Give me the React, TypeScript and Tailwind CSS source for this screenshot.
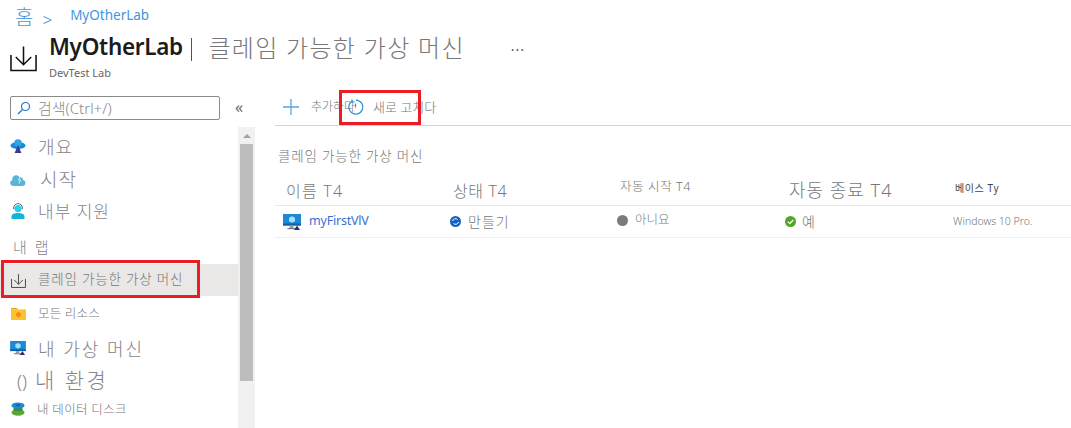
import { ReactNode } from 'react';

const font = 'font-["Noto_Sans","Noto_Sans_CJK_KR",sans-serif]';

function DownloadIcon({ className = '' }: { className?: string }) {
  return (
    <svg className={className} viewBox="0 0 28 28" fill="none" stroke="currentColor" strokeWidth={1.6}>
      <path d="M1 11v16h26V11" />
      <path d="M14 2v19M6 13l8 8 8-8" />
    </svg>
  );
}

function CloudIcon() {
  return (
    <svg className="w-[16px] h-[16px]" viewBox="0 0 16 16">
      <ellipse cx="8" cy="6.5" rx="7.5" ry="3.6" fill="#1e88d8" />
      <circle cx="8" cy="4" r="3.8" fill="#2fa4e7" />
      <path d="M8 6l3.4 8H4.6z" fill="#3b3a8f" />
    </svg>
  );
}

function BoltCloudIcon() {
  return (
    <svg className="w-[16px] h-[12px]" viewBox="0 0 16 12">
      <path d="M3 12a3 3 0 0 1-.6-5.9A4 4 0 0 1 9.6 3 3.4 3.4 0 0 1 13 6.1 3 3 0 0 1 13 12z" fill="#59b4d9" />
      <path d="M11 1L8.5 6h2L9 9.5" stroke="#ffffff" strokeWidth={0.8} fill="none" />
    </svg>
  );
}

function SupportIcon() {
  return (
    <svg className="w-[14px] h-[16px]" viewBox="0 0 14 16">
      <path d="M0.5 16v-2.5C0.5 11 3.5 10 7 10s6.5 1 6.5 3.5V16z" fill="#12b5d8" />
      <circle cx="7" cy="5.6" r="3.6" fill="#28d0f0" />
      <path d="M2.6 6V5a4.4 4.4 0 0 1 8.8 0v1" fill="none" stroke="#555555" strokeWidth={0.9} />
    </svg>
  );
}

function FolderIcon() {
  return (
    <svg className="w-[15px] h-[13px]" viewBox="0 0 15 13">
      <path d="M0 1h6l1 1.5H0z" fill="#d9a520" />
      <rect x="0" y="2.5" width="15" height="10.5" fill="#fcc22d" />
      <path d="M7.5 5l2.4 1.3v2.6L7.5 10.4 5.1 8.9V6.3z" fill="#f08a24" />
    </svg>
  );
}

function MonitorIcon({ className = '' }: { className?: string }) {
  return (
    <svg className={className} viewBox="0 0 18 16">
      <rect x="0" y="0" width="18" height="11.5" fill="#1e88d8" />
      <rect x="0" y="9.5" width="18" height="2" fill="#0f5fa8" />
      <path d="M9 2.2l3 1.6v3.4L9 8.8 6 7.2V3.8z" fill="#9fe3f7" />
      <rect x="6.5" y="11.5" width="4" height="2.5" fill="#9a9a9a" />
      <rect x="4.5" y="14" width="8" height="1.2" fill="#777777" />
      <path d="M14 11.5l3 4.5h-6z" fill="#2c2a7d" />
    </svg>
  );
}

function DiskIcon() {
  return (
    <svg className="w-[14px] h-[14px]" viewBox="0 0 14 14">
      <ellipse cx="7" cy="10.5" rx="6.5" ry="3.2" fill="#58a83a" />
      <rect x="2.5" y="6" width="9" height="3" fill="#3f8f2d" />
      <ellipse cx="7" cy="3.6" rx="6.5" ry="3.2" fill="#1e88d8" />
      <ellipse cx="7" cy="3.2" rx="2.4" ry="1" fill="#0f5fa8" />
    </svg>
  );
}

function NavRow({ icon, iconBox, children, className }: { icon: ReactNode; iconBox: string; children: ReactNode; className: string }) {
  return (
    <div className={`flex items-center ${className}`}>
      <div className={`flex justify-center shrink-0 ${iconBox}`}>{icon}</div>
      {children}
    </div>
  );
}

export default function App() {
  return (
    <div className={`relative w-[1071px] h-[428px] overflow-hidden bg-white ${font}`}>
      {/* Breadcrumb */}
      <div className="flex items-center h-[36px] pl-[15px] text-[#3f96dc]">
        <span className="text-[20px] leading-none font-light">홈</span>
        <span className="ml-[9px] mt-[3px] text-[17px] leading-none font-light">&gt;</span>
        <span className="ml-[18px] -mt-[4px] text-[13.5px] leading-none">MyOtherLab</span>
      </div>

      {/* Title */}
      <div className="flex h-[50px] pl-[10px]">
        <DownloadIcon className="w-[27px] h-[28px] mt-[8px] text-[#111111]" />
        <div className="ml-[12px]">
          <div className="flex items-center h-[27px] -mt-[2px]">
            <span className="text-[22.5px] leading-none font-semibold text-[#1b1b1b] tracking-[-0.3px]">MyOtherLab</span>
            <span className="w-[1.5px] h-[23px] ml-[8px] mt-[3px] bg-[#8a3b32]" />
            <span className="ml-[16px] text-[24px] leading-none font-light text-[#777777] tracking-[1.3px]">클레임 가능한 가상 머신</span>
            <span className="ml-[46px] -mt-[3px] text-[14px] leading-none text-[#555555] tracking-[1px]">...</span>
          </div>
          <div className="mt-[5px] text-[11px] leading-[14px] text-[#666666]">DevTest Lab</div>
        </div>
      </div>

      <div className="flex">
        {/* Sidebar */}
        <div className="relative w-[255px] shrink-0">
          <div className="flex items-start h-[43px] pl-[10px] pt-[10px]">
            <div className="flex items-center w-[210px] h-[24px] border border-[#8a8a8a] rounded-[2px] pl-[6px]">
              <svg className="w-[14px] h-[14px] text-[#1e78c8]" viewBox="0 0 14 14" fill="none" stroke="currentColor" strokeWidth={1.2}>
                <circle cx="8.5" cy="5.5" r="4" />
                <path d="M5.5 8.5L1 13" />
              </svg>
              <span className="ml-[7px] text-[15px] leading-none font-light text-[#8a8a8a]">검색(Ctrl+/)</span>
            </div>
            <span className="ml-[15px] mt-[3px] text-[16px] leading-none text-[#666666]">«</span>
          </div>

          <div className="flex">
            <div className="w-[238px] shrink-0 text-[#86848c] font-light">
              <NavRow icon={<CloudIcon />} iconBox="w-[16px] ml-[10px] mr-[12px]" className="h-[35px]">
                <span className="text-[18px] leading-none tracking-[1px]">개요</span>
              </NavRow>
              <NavRow icon={<BoltCloudIcon />} iconBox="w-[16px] ml-[10px] mr-[14px]" className="h-[32px]">
                <span className="text-[19px] leading-none tracking-[1px]">시작</span>
              </NavRow>
              <NavRow icon={<SupportIcon />} iconBox="w-[16px] ml-[10px] mr-[12px]" className="h-[30px]">
                <span className="text-[17px] leading-none tracking-[1px]">내부 지원</span>
              </NavRow>

              <div className="h-[38px] flex items-end pl-[13px] pb-[9px] text-[15px] leading-none tracking-[2px]">내 랩</div>
              <div className="h-px ml-[10px] w-[208px] -mb-px bg-[#cfcfcf]" />

              <NavRow icon={<DownloadIcon className="w-[15px] h-[15px] text-[#333333]" />} iconBox="w-[16px] ml-[10px] mr-[12px]" className="h-[32px] bg-[#e9e8e6]">
                <span className="text-[13.5px] leading-none font-light tracking-[0.8px] text-[#777777] whitespace-nowrap">클레임 가능한 가상 머신</span>
              </NavRow>
              <NavRow icon={<FolderIcon />} iconBox="w-[16px] ml-[10px] mr-[12px]" className="h-[34px]">
                <span className="mt-[2px] text-[12.5px] leading-none font-light tracking-[0.2px] text-[#777777]">모든 리소스</span>
              </NavRow>
              <NavRow icon={<MonitorIcon className="w-[16px] h-[14px]" />} iconBox="w-[16px] ml-[10px] mr-[12px]" className="h-[36px]">
                <span className="mt-[2px] text-[18px] leading-none tracking-[2px]">내 가상 머신</span>
              </NavRow>
              <NavRow icon={<span className="text-[18px] leading-none">()</span>} iconBox="w-[20px] ml-[12px] mr-[3px]" className="h-[30px]">
                <span className="-mt-[2px] text-[21px] leading-none tracking-[2.5px]">내 환경</span>
              </NavRow>
              <NavRow icon={<DiskIcon />} iconBox="w-[16px] ml-[10px] mr-[11px]" className="h-[26px]">
                <span className="mt-[2px] text-[12.5px] leading-none font-light tracking-[0.3px] text-[#777777]">내 데이터 디스크</span>
              </NavRow>
            </div>

            {/* Scrollbar */}
            <div className="w-[17px] h-[305px] -mt-[2px] shrink-0 bg-[#f1f1f1] flex flex-col items-center">
              <div className="flex items-center justify-center h-[17px]">
                <div className="w-0 h-0 border-x-[4px] border-x-transparent border-b-[4px] border-b-[#a3a3a3]" />
              </div>
              <div className="w-[13px] h-[237px] bg-[#bdbdbd]" />
            </div>
          </div>

          <div className="absolute left-[1px] top-[174px] w-[199px] h-[38px] border-[3px] border-[#ed1c24]" />
        </div>

        {/* Main */}
        <div className="relative flex-1 ml-[20px]">
          <div className="flex items-center h-[40px] pt-[3px] border-b border-[#d5d5d5]">
            <svg className="ml-[8px] w-[16px] h-[16px] text-[#57a7e0]" viewBox="0 0 16 16" fill="none" stroke="currentColor" strokeWidth={1.3}>
              <path d="M8 0v16M0 8h16" />
            </svg>
            <span className="ml-[12px] text-[12px] leading-none font-light text-[#777777] whitespace-nowrap w-[36px]">추가하다</span>
            <svg className="w-[17px] h-[17px] text-[#2a8fd6]" viewBox="0 0 17 17" fill="none" stroke="currentColor" strokeWidth={1.2}>
              <path d="M5 2.2a7 7 0 1 0 4-1.1" />
              <path d="M8.5 4.5v4" />
              <path d="M5 0.5v2.5h2.8" />
            </svg>
            <span className="ml-[9px] text-[13px] leading-none font-light text-[#777777]">새로 고치다</span>
          </div>

          <div className="h-[52px] flex items-end pl-[3px] pb-[15px] text-[13.5px] leading-none font-light tracking-[0.8px] text-[#777777]">클레임 가능한 가상 머신</div>

          <div className="grid grid-cols-[167px_167px_169px_166px_1fr] h-[28px] border-b border-[#e8e8e8] items-center pl-[11px] pb-[2px] text-[#777777] font-light">
            <span className="text-[16px] leading-none tracking-[1.2px]">이름 T4</span>
            <span className="text-[16px] leading-none tracking-[0.6px]">상태 T4</span>
            <span className="text-[12.5px] leading-none -mt-[6px] tracking-[0.6px] whitespace-nowrap">자동 시작 T4</span>
            <span className="text-[18px] leading-none -mt-[1px] tracking-[1px] whitespace-nowrap">자동 종료 T4</span>
            <span className="text-[10px] leading-none -mt-[6px] font-normal tracking-[0.6px] text-[#444444]">베이스 Ty</span>
          </div>

          <div className="grid grid-cols-[167px_167px_168px_167px_1fr] h-[32px] border-b border-[#efefef] items-center pl-[8px] text-[#777777]">
            <div className="flex items-center">
              <MonitorIcon className="w-[18px] h-[16px]" />
              <span className="ml-[8px] text-[12.5px] leading-none tracking-[-0.2px] text-[#3a6fd0]">myFirstVlV</span>
            </div>
            <div className="flex items-center">
              <svg className="w-[11px] h-[11px]" viewBox="0 0 11 11">
                <circle cx="5.5" cy="5.5" r="5.5" fill="#0f62c8" />
                <path d="M2.5 5a3 3 0 0 1 5-1.5M8.5 6a3 3 0 0 1-5 1.5" stroke="#ffffff" strokeWidth={1} fill="none" />
              </svg>
              <span className="ml-[7px] text-[14px] leading-none font-light tracking-[1px]">만들기</span>
            </div>
            <div className="flex items-center -mt-[2px]">
              <span className="w-[11px] h-[11px] rounded-full bg-[#7a7a7a]" />
              <span className="ml-[7px] text-[12.5px] leading-none font-light">아니요</span>
            </div>
            <div className="flex items-center">
              <svg className="w-[11px] h-[11px]" viewBox="0 0 11 11">
                <circle cx="5.5" cy="5.5" r="5.5" fill="#57a32a" />
                <path d="M2.8 5.6l2 2 3.4-3.6" stroke="#ffffff" strokeWidth={1.3} fill="none" />
              </svg>
              <span className="ml-[6px] text-[14px] leading-none font-light">예</span>
            </div>
            <span className="text-[10.5px] leading-none pl-px font-light whitespace-nowrap">Windows 10 Pro.</span>
          </div>

          <div className="absolute left-[64px] top-[4px] w-[82px] h-[35px] border-[3px] border-[#ed1c24]" />
        </div>
      </div>
    </div>
  );
}
